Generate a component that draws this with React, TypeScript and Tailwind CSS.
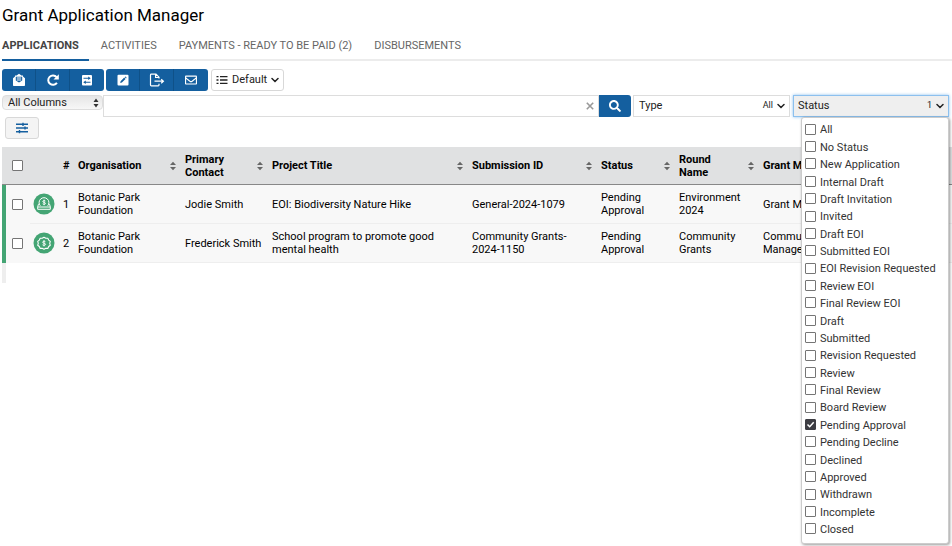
import React, { useState } from "react";
import clsx from "clsx";
import { FaSearch, FaRegEnvelope } from "react-icons/fa";

const TABS = ["Applications", "Activities", "Payments - Ready to be paid (2)", "Disbursements"];

const STATUSES = [
  "All",
  "No Status",
  "New Application",
  "Internal Draft",
  "Draft Invitation",
  "Invited",
  "Draft EOI",
  "Submitted EOI",
  "EOI Revision Requested",
  "Review EOI",
  "Final Review EOI",
  "Draft",
  "Submitted",
  "Revision Requested",
  "Review",
  "Final Review",
  "Board Review",
  "Pending Approval",
  "Pending Decline",
  "Declined",
  "Approved",
  "Withdrawn",
  "Incomplete",
  "Closed",
];

const COLUMNS = [
  { label: "Organisation", width: "w-[107px]" },
  { label: "Primary Contact", width: "w-[87px]" },
  { label: "Project Title", width: "w-[200px]" },
  { label: "Submission ID", width: "w-[129px]" },
  { label: "Status", width: "w-[78px]" },
  { label: "Round Name", width: "w-[84px]" },
  { label: "Grant Manager", width: "w-[104px]" },
];

const ROWS = [
  {
    kind: "eoi",
    cells: [
      "Botanic Park Foundation",
      "Jodie Smith",
      "EOI: Biodiversity Nature Hike",
      "General-2024-1079",
      "Pending Approval",
      "Environment 2024",
      "Grant Manager",
    ],
  },
  {
    kind: "grant",
    cells: [
      "Botanic Park Foundation",
      "Frederick Smith",
      "School program to promote good mental health",
      "Community Grants-2024-1150",
      "Pending Approval",
      "Community Grants",
      "Community Manager",
    ],
  },
];

// ICONS
const Chevron = () => (
  <svg viewBox="0 0 8 8" className="w-2 h-2 shrink-0" fill="none" stroke="currentColor" strokeWidth="1.5">
    <path d="M1 2.5 4 5.5 7 2.5" strokeLinecap="round" />
  </svg>
);

const MailOpen = () => (
  <svg viewBox="0 0 14 14" className="w-3.5 h-3.5">
    <path d="M7 .8 4.6 2.4H3v1.2L1 5.2v6.9c0 .6.4 1 1 1h10c.6 0 1-.4 1-1V5.2l-2-1.6V2.4H9.4z" fill="#fff" />
    <path d="M3.8 3.7h6.4v3.9L7 9.6 3.8 7.6z" fill="#145f9f" />
    <path d="M4.8 4.4h4.4v1.1H4.8zM4.8 6.4h4.4v1.1H4.8z" fill="#fff" />
  </svg>
);

const Refresh = () => (
  <svg viewBox="0 0 14 14" className="w-3.5 h-3.5">
    <path d="M10.9 9.7A4.7 4.7 0 1 1 10.600 4.200" fill="none" stroke="#fff" strokeWidth="2" />
    <path d="M12.8 1.2v5.300H7.500z" fill="#fff" />
  </svg>
);

const Exchange = () => (
  <svg viewBox="0 0 12 12" className="w-3 h-3">
    <rect x="1" y="1" width="10" height="10.5" rx="1" fill="#fff" />
    <path d="M2.500 4.300h5.500M4 8.200h5.500" stroke="#145f9f" strokeWidth="1.1" />
    <path d="M7.200 2.500 9.800 4.300 7.200 6zM4.800 6.400 2.200 8.200l2.600 1.800z" fill="#145f9f" />
  </svg>
);

const EditSquare = () => (
  <svg viewBox="0 0 12 12" className="w-3 h-3">
    <rect x=".5" y=".8" width="11" height="10.7" rx="1" fill="#fff" />
    <path d="m3.2 8.9.4-1.7 3.6-3.6 1.3 1.3-3.6 3.6zM7.7 3.1l.7-.7 1.3 1.3-.7.7z" fill="#145f9f" />
  </svg>
);

const FileExport = () => (
  <svg viewBox="0 0 16 14" className="w-4 h-3.5" fill="none" stroke="#fff" strokeWidth="1.2">
    <path d="M10 5.6V4.2L7 1.2H2.3c-.5 0-.8.3-.8.8v10c0 .5.3.8.8.8h6.9c.5 0 .8-.3.8-.8v-1.2M6.6 1.3v3.2H10" />
    <path d="M5.5 8.2h8M12.2 6.2l2.2 2-2.2 2" />
  </svg>
);

const ListIcon = () => (
  <svg viewBox="0 0 12 10" className="w-3 h-2.5" stroke="currentColor" strokeWidth="1.3">
    <path d="M.5 1.6h2M.5 5h2M.5 8.4h2M4 1.6h7.5M4 5h7.5M4 8.4h7.5" />
  </svg>
);

const Sliders = () => (
  <svg viewBox="0 0 14 12" className="w-3.5 h-3" stroke="#145f9f" strokeWidth="1.4">
    <path d="M1 2.3h12M1 6h12M1 9.7h12" />
    <path d="M8 .7v3.2M10 4.4v3.2M4.5 8.1v3.2" />
  </svg>
);

const SortIcon = () => (
  <svg viewBox="0 0 8 10" className="w-2 h-2.5 shrink-0 text-[#666]" fill="currentColor">
    <path d="M1 4 4 .8 7 4zM1 6h6L4 9.2z" />
  </svg>
);

const KindIcon: React.FC<{ kind: string }> = ({ kind }) => (
  <svg viewBox="0 0 22 22" className="block w-[22px] h-[22px]" fill="none" stroke="#fff">
    <circle cx="11" cy="11" r="10.5" fill="#44a574" stroke="none" />
    {kind === "eoi" ? (
      <>
        <path d="M7.3 12.8a4.9 4.9 0 1 1 7.400 0" strokeWidth="1" />
        <path d="M6.3 11.3H5.4L4.700 14v2.300h12.600V14l-.7-2.700h-.9M4.900 14h12.200" strokeWidth="1" />
        <path d="M12.4 8c-.4-.5-2.6-.6-2.6.5 0 1.3 2.7.6 2.7 1.9 0 1.2-2.3 1.1-2.8.4M11.1 6.6v5.6" strokeWidth=".9" />
      </>
    ) : (
      <>
        <path
          d="m11 5.3 1.8 1 2-.1.9 1.9 1.6 1.3-.6 1.9.6 1.9-1.6 1.3-.9 1.9-2-.1-1.8 1-1.8-1-2 .1-.9-1.9-1.6-1.3.6-1.9-.6-1.9 1.6-1.3.9-1.9 2 .1z"
          strokeWidth="1.1"
          strokeLinejoin="round"
        />
        <path d="M12.4 9.7c-.4-.6-2.8-.7-2.8.5 0 1.4 3 .7 3 2.1 0 1.3-2.6 1.2-3.1.5M11 8.1v6.300" strokeWidth=".9" />
      </>
    )}
  </svg>
);

// TOOLBAR BUTTON GROUP
const ToolGroup: React.FC<{ items: { label: string; icon: React.ReactNode }[] }> = ({ items }) => (
  <div className="flex h-[22px] rounded-[3px] bg-[#145f9f] overflow-hidden divide-x divide-[#0f5188]">
    {items.map((item) => (
      <button
        key={item.label}
        type="button"
        aria-label={item.label}
        className="flex items-center justify-center w-[34px] text-white"
      >
        {item.icon}
      </button>
    ))}
  </div>
);

const checkboxClass =
  "block appearance-none w-[11px] h-[11px] shrink-0 bg-white border border-[#757575] rounded-[1px]";

const App: React.FC = () => {
  const [tab, setTab] = useState(TABS[0]);
  const [query, setQuery] = useState("");
  const [selected, setSelected] = useState<string[]>(["Pending Approval"]);
  const [open, setOpen] = useState(true);

  const toggle = (status: string) => {
    setSelected((prev) =>
      prev.includes(status) ? prev.filter((s) => s !== status) : [...prev, status]
    );
  };

  return (
    <div className="min-h-screen font-[Roboto,'Liberation_Sans',sans-serif] text-[11px] text-black bg-white pl-0.5">
      <h1 className="pt-1 text-[17px] leading-[22px]">Grant Application Manager</h1>

      {/* TABS */}
      <nav className="flex gap-[22px] mt-2.5 border-b-2 border-[#ececec] text-[#666]">
        {TABS.map((t) => (
          <button
            key={t}
            type="button"
            onClick={() => setTab(t)}
            className={clsx(
              "h-[25px] pb-0.5 -mb-0.5 uppercase border-b-2",
              tab === t
                ? "pr-2.5 -mr-2.5 border-[#145f9f] font-bold text-[#444]"
                : "border-transparent"
            )}
          >
            {t}
          </button>
        ))}
      </nav>

      {/* TOOLBAR */}
      <div className="flex gap-0.5 pt-2">
        <ToolGroup
          items={[
            { label: "Open mail", icon: <MailOpen /> },
            { label: "Refresh", icon: <Refresh /> },
            { label: "Transfer", icon: <Exchange /> },
          ]}
        />
        <ToolGroup
          items={[
            { label: "Edit", icon: <EditSquare /> },
            { label: "Export", icon: <FileExport /> },
            { label: "Email", icon: <FaRegEnvelope size={12} /> },
          ]}
        />
        <button
          type="button"
          className="flex items-center gap-1 h-[22px] ml-px px-1 border border-[#d8d8d8] rounded-[3px] text-[#222]"
        >
          <ListIcon />
          Default
          <Chevron />
        </button>
      </div>

      {/* FILTERS */}
      <div className="flex items-start pt-1 pr-[3px]">
        <div className="relative w-[101px]">
          <select
            aria-label="Search column"
            className="block appearance-none w-full h-[15px] pl-[5px] rounded-[4px] border border-[#ddd] bg-linear-to-b from-[#e6e6e6] to-[#f7f7f7] text-[11px] leading-[13px] text-[#222]"
          >
            <option>All Columns</option>
          </select>
          <svg viewBox="0 0 6 10" className="absolute right-1 top-[3px] w-1.5 h-2.5 pointer-events-none" fill="#333">
            <path d="M.5 4 3 .5 5.5 4zM.5 6h5L3 9.5z" />
          </svg>
        </div>
        <div className="flex flex-1 items-center h-[22px] border border-[#ddd]">
          <input
            type="text"
            aria-label="Search"
            value={query}
            onChange={(e) => setQuery(e.target.value)}
            className="flex-1 h-full px-2 outline-none"
          />
          <button type="button" aria-label="Clear" onClick={() => setQuery("")} className="px-1">
            <svg viewBox="0 0 8 8" className="w-2 h-2" stroke="#999" strokeWidth="1.6">
              <path d="m.8.8 6.4 6.4M7.2.8.8 7.2" />
            </svg>
          </button>
        </div>
        <button
          type="button"
          aria-label="Run search"
          className="flex items-center justify-center w-8 h-[22px] rounded-r-[3px] bg-[#145f9f] text-white"
        >
          <FaSearch size={12} />
        </button>
        <button
          type="button"
          className="flex items-center gap-1 w-[157px] h-[22px] ml-0.5 pl-[5px] pr-1 border border-[#ddd] text-[#222]"
        >
          <span className="flex-1 text-left">Type</span>
          <span className="text-[9px]">All</span>
          <Chevron />
        </button>
        <div className="relative ml-[3px] w-[156px]">
          <button
            type="button"
            aria-expanded={open}
            onClick={() => setOpen(!open)}
            className="flex items-center gap-1 w-full h-[22px] pl-1 pr-1 border border-[#8cc0ee] bg-[#efefef] shadow-[0_0_3px_#8cc0ee] text-[#222]"
          >
            <span className="flex-1 text-left">Status</span>
            <span className="text-[9px]">{selected.length}</span>
            <Chevron />
          </button>
          {open && (
            <div className="absolute right-0 top-full z-10 flex flex-col w-[148px] h-[427px] py-1 pl-[3px] bg-white border border-[#ccc] rounded-[3px] shadow-[1px_1px_3px_rgba(0,0,0,0.4)]">
              {STATUSES.map((status) => (
                <label key={status} className="flex flex-1 items-center gap-1 text-[#333] whitespace-nowrap">
                  <span className="relative pb-[3px]">
                    <input
                      type="checkbox"
                      checked={selected.includes(status)}
                      onChange={() => toggle(status)}
                      className={clsx(checkboxClass, "checked:bg-[#3c3c42] checked:border-[#3c3c42]")}
                    />
                    {selected.includes(status) && (
                      <svg
                        viewBox="0 0 11 11"
                        className="absolute left-0 top-0 w-[11px] h-[11px] pointer-events-none"
                        fill="none"
                        stroke="#fff"
                        strokeWidth="1.5"
                      >
                        <path d="m2.5 5.5 2.2 2.2 4-4.4" />
                      </svg>
                    )}
                  </span>
                  {status}
                </label>
              ))}
            </div>
          )}
        </div>
      </div>

      <button
        type="button"
        aria-label="Filter settings"
        className="flex items-center justify-center w-[34px] h-[22px] ml-[3px] border border-[#d8d8d8] rounded-[3px] bg-[#f4f4f4]"
      >
        <Sliders />
      </button>

      {/* RESULTS */}
      <div className="mt-2 pb-5 border-l-4 border-[#eee]">
        <div className="-ml-1">
          <table className="w-full table-fixed border-separate border-spacing-0 leading-[13px]">
            <thead>
              <tr className="h-[38px] bg-[#e0e1e2] text-left">
                <th className="w-7 pl-2.5 border-b border-[#888]">
                  <input type="checkbox" aria-label="Select all" className={checkboxClass} />
                </th>
                <th className="w-[29px] border-b border-[#888]" aria-label="Type" />
                <th className="w-3.5 pl-1 border-b border-[#888]">#</th>
                {COLUMNS.map((col) => (
                  <th key={col.label} className={clsx("pl-[5px] pr-[3px] border-b border-[#888]", col.width)}>
                    <div className="flex items-center justify-between gap-2">
                      {col.label}
                      <SortIcon />
                    </div>
                  </th>
                ))}
                <th className="border-b border-[#888]" aria-label="Actions" />
              </tr>
            </thead>
            <tbody>
              {ROWS.map((row, i) => (
                <tr key={row.kind} className="h-[39px] bg-[#f8f8f8]">
                  <td className="pl-1.5 border-l-4 border-[#44a574]">
                    <input type="checkbox" aria-label={`Select row ${i + 1}`} className={checkboxClass} />
                  </td>
                  <td className="pl-[3px] border-b border-[#eee]">
                    <KindIcon kind={row.kind} />
                  </td>
                  <td className="pl-1 border-b border-[#eee]">{i + 1}</td>
                  {row.cells.map((cell, c) => (
                    <td key={c} className="pl-[5px] pr-[3px] border-b border-[#eee]">
                      {cell}
                    </td>
                  ))}
                  <td className="border-b border-[#eee]" />
                </tr>
              ))}
            </tbody>
          </table>
        </div>
      </div>
    </div>
  );
};

export default App;
